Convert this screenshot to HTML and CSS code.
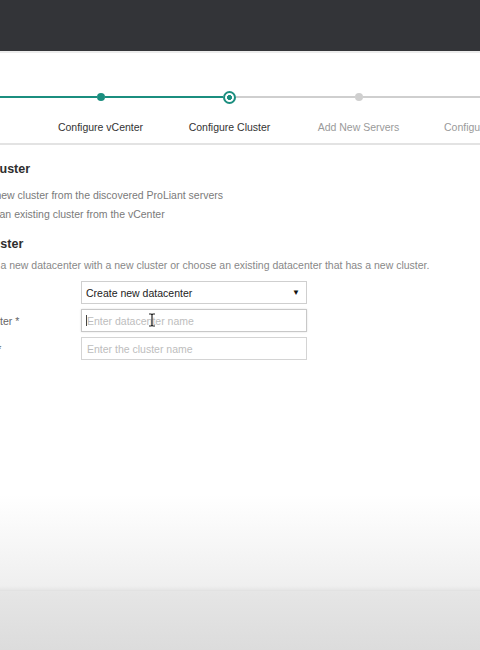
FILE: index.html
```html
<!DOCTYPE html>
<html lang="en">
<head>
<meta charset="utf-8">
<title>Configure Cluster</title>
<link rel="stylesheet" href="styles.css">
</head>
<body>
<header class="topbar"></header>
<main class="page">
  <nav class="stepper">
    <div class="step done">
      <div class="track"><span class="seg on"></span><span class="dot"></span><span class="seg on"></span></div>
      <div class="step-label">Discover</div>
    </div>
    <div class="step done">
      <div class="track"><span class="seg on"></span><span class="dot"></span><span class="seg on"></span></div>
      <div class="step-label">Configure vCenter</div>
    </div>
    <div class="step current">
      <div class="track"><span class="seg on"></span><span class="ring"></span><span class="seg"></span></div>
      <div class="step-label">Configure Cluster</div>
    </div>
    <div class="step todo">
      <div class="track"><span class="seg"></span><span class="dot"></span><span class="seg"></span></div>
      <div class="step-label">Add New Servers</div>
    </div>
    <div class="step todo">
      <div class="track"><span class="seg"></span><span class="dot"></span><span class="seg"></span></div>
      <div class="step-label">Configure Network</div>
    </div>
  </nav>

  <section class="content">
    <h3 class="heading h-cluster">Cluster</h3>
    <label class="radio"><input type="radio" name="mode" checked><span>Create new cluster from the discovered ProLiant servers</span></label>
    <label class="radio"><input type="radio" name="mode"><span>Expand an existing cluster from the vCenter</span></label>

    <h3 class="heading h-new">New Cluster</h3>
    <p class="desc">Create a new datacenter with a new cluster or choose an existing datacenter that has a new cluster.</p>

    <div class="form">
      <span class="label">Select</span>
      <div class="select"><span>Create new datacenter</span><span class="arrow">&#9660;</span></div>

      <span class="label">Datacenter *</span>
      <div class="field focused">
        <input type="text" placeholder="Enter datacenter name">
        <span class="caret"></span>
        <svg class="ibeam" width="8" height="14" viewBox="0 0 8 14"><path d="M1 1h2.2l.8.8.8-.8H7M1 13h2.2l.8-.8.8.8H7M4 1.8v10.4" fill="none" stroke="#222" stroke-width="1.2"/></svg>
      </div>

      <span class="label">Cluster *</span>
      <div class="field"><input type="text" placeholder="Enter the cluster name"></div>
    </div>
  </section>
</main>
<footer class="footer"></footer>
</body>
</html>
```

FILE: styles.css
```css
html {
  background: linear-gradient(to bottom, #ffffff 0, #ffffff 495px, #efefef 586px, #e6e6e6 590px, #e4e4e4 600px, #dcdcdc 650px);
  min-height: 650px;
}
body {
  margin: 0;
  min-height: 650px;
  display: flex;
  flex-direction: column;
  font-family: "Liberation Sans", Arial, sans-serif;
  font-size: 10.5px;
  color: #333;
  overflow: hidden;
}
.topbar {
  height: 51px;
  background: #333438;
  border-bottom: 2px solid #ececec;
  flex: none;
}
.page {
  flex: 1;
  display: flex;
  flex-direction: column;
}

/* stepper */
.stepper {
  display: flex;
  margin-left: -93px;
  padding-top: 36px;
  padding-bottom: 10px;
  border-bottom: 2px solid #e3e3e3;
  width: 700px;
}
.step {
  width: 129px;
  flex: none;
  display: flex;
  flex-direction: column;
  align-items: center;
}
.track {
  width: 100%;
  height: 16px;
  display: flex;
  align-items: center;
}
.seg {
  flex: 1;
  height: 2px;
  background: #cfcfcf;
}
.seg.on {
  background: #1b8e7f;
  height: 2.5px;
}
.dot {
  width: 8px;
  height: 8px;
  border-radius: 50%;
  background: #cfcfcf;
  flex: none;
}
.done .dot { background: #1b8e7f; }
.ring {
  width: 9px;
  height: 9px;
  border-radius: 50%;
  border: 2.5px solid #1b8e7f;
  background: radial-gradient(circle, #1b8e7f 0, #1b8e7f 2.2px, #fff 2.8px);
  flex: none;
}
.step-label {
  margin-top: 16px;
  line-height: 12px;
  white-space: nowrap;
  color: #333;
}
.todo .step-label { color: #9a9a9a; }

/* content */
.content {
  margin-left: -56px;
  padding-top: 16px;
  display: flex;
  flex-direction: column;
  align-items: flex-start;
}
.heading {
  margin: 0;
  font-size: 12.5px;
  line-height: 16px;
  font-weight: bold;
  color: #2e2e2e;
}
.h-cluster { margin-left: 43px; margin-bottom: 9px; }
.h-new { margin-left: 7px; margin-top: 12px; }
.radio {
  display: flex;
  align-items: center;
  line-height: 19px;
  color: #7a7a7a;
  white-space: nowrap;
}
.radio input {
  width: 13px;
  height: 13px;
  margin: 0 4px 0 0;
}
.desc {
  margin: 6px 0 0 22px;
  line-height: 14px;
  color: #888;
  white-space: nowrap;
}
.form {
  margin: 9px 0 0 17px;
  display: grid;
  grid-template-columns: 120px 226px;
  row-gap: 5px;
  align-items: center;
}
.label {
  color: #666;
  white-space: nowrap;
}
.select {
  height: 23px;
  box-sizing: border-box;
  border: 1px solid #cfcfcf;
  display: flex;
  align-items: center;
  justify-content: space-between;
  padding: 0 6px 0 4px;
  color: #222;
}
.arrow {
  font-size: 8px;
  color: #111;
}
.field {
  position: relative;
  height: 23px;
}
.field input {
  width: 100%;
  height: 23px;
  box-sizing: border-box;
  border: 1px solid #d4d4d4;
  padding: 0 5px;
  margin: 0;
  font-family: "Liberation Sans", Arial, sans-serif;
  font-size: 10.5px;
  color: #222;
  outline: none;
}
.field.focused input {
  border-color: #c8c8c8;
  box-shadow: 0 0 2px rgba(0, 0, 0, 0.12);
}
.field input::placeholder { color: #bdbdbd; }
.caret {
  position: absolute;
  left: 5px;
  top: 6px;
  width: 1px;
  height: 11px;
  background: #444;
}
.ibeam {
  position: absolute;
  left: 67px;
  top: 4px;
}
.footer {
  height: 59px;
  border-top: 1px solid #e2e2e2;
  flex: none;
}
```
